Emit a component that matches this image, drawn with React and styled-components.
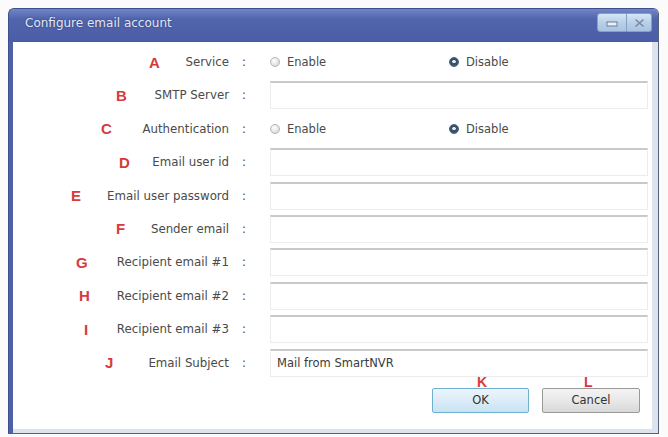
import styled, { createGlobalStyle } from "styled-components";

const Global = createGlobalStyle`
  html, body {
    margin: 0;
    padding: 0;
    background: #fbfbfb;
  }
  body {
    font-family: "DejaVu Sans", Verdana, sans-serif;
  }
`;

const Page = styled.div`
  width: 668px;
  height: 437px;
  padding: 8px 0 0 8px;
  box-sizing: border-box;
`;

const Window = styled.div`
  width: 651px;
  height: 426px;
  box-sizing: border-box;
  display: flex;
  flex-direction: column;
  border: 1px solid #55607c;
  border-top-color: #3f4f8c;
  border-left-color: #3f4f8c;
  border-radius: 6px 6px 0 0;
  background: linear-gradient(to right, #4d61a9 0, #4d61a9 4px, #dde3ec 4px);
  overflow: hidden;
`;

const TitleBar = styled.div`
  height: 33px;
  flex: none;
  display: flex;
  align-items: flex-start;
  justify-content: space-between;
  background: linear-gradient(#7185c6 0, #5165ad 30%, #4a5ca5 100%);
`;

const Title = styled.div`
  padding: 7px 0 0 16px;
  font-size: 12px;
  color: #e3e8f5;
  text-shadow: 0 0 2px rgba(20, 30, 80, 0.6);
`;

const Controls = styled.div`
  display: flex;
  margin: 4px 6px 0 0;
`;

const CtrlButton = styled.div`
  width: ${(p) => p.$w}px;
  height: 19px;
  box-sizing: border-box;
  display: flex;
  align-items: center;
  justify-content: center;
  border: 1px solid #87a0c8;
  border-radius: ${(p) => (p.$first ? "3px 0 0 3px" : "0 3px 3px 0")};
  border-left-width: ${(p) => (p.$first ? "1px" : "0")};
  background: linear-gradient(#d6e6f4, #b9d0e8 50%, #a9c3e0);
`;

const Body = styled.div`
  flex: 1;
  margin: 0 6px 4px 4px;
  background: #fff;
  display: flex;
  flex-direction: column;
`;

const Form = styled.div`
  display: grid;
  grid-template-columns: 218px 39px 378px;
  grid-auto-rows: 28px;
  row-gap: 5.4px;
  padding-top: 6px;
`;

const LabelCell = styled.div`
  display: flex;
  align-items: center;
  padding-right: 2px;
`;

const Letter = styled.span`
  margin-left: ${(p) => p.$x}px;
  font-family: "Liberation Sans", Arial, sans-serif;
  font-weight: bold;
  font-size: 15px;
  color: #d8393c;
`;

const LabelText = styled.span`
  margin-left: auto;
  font-size: 11.8px;
  color: #4a4a4a;
`;

const Colon = styled.div`
  display: flex;
  align-items: center;
  padding-left: 11px;
  font-size: 11.8px;
  color: #4a4a4a;
`;

const Input = styled.div`
  box-sizing: border-box;
  display: flex;
  align-items: center;
  padding-left: 6px;
  border: 1px solid #ececec;
  border-top: 2px solid #c9c9c9;
  background: #fff;
  font-size: 11.5px;
  color: #3a3a3a;
`;

const RadioGroup = styled.div`
  display: flex;
  align-items: center;
`;

const RadioItem = styled.label`
  width: 179px;
  display: flex;
  align-items: center;
  gap: 7px;
  font-size: 11.5px;
  color: #4a4a4a;
`;

const RadioDot = styled.span`
  width: 10px;
  height: 10px;
  box-sizing: border-box;
  border-radius: 50%;
  border: 1px solid ${(p) => (p.$on ? "#4a5a6e" : "#b4b4b4")};
  background: ${(p) =>
    p.$on
      ? "radial-gradient(circle at 50% 45%, #dfe8f2 0 1.5px, #2f4a66 2px, #526a85 100%)"
      : "radial-gradient(circle at 40% 35%, #ffffff, #d9d9d9 80%)"};
`;

const ButtonRow = styled.div`
  display: flex;
  justify-content: flex-end;
  gap: 13px;
  margin-top: 11px;
  padding-right: 12px;
`;

const BtnWrap = styled.div`
  position: relative;
`;

const Button = styled.div`
  width: ${(p) => (p.$primary ? 97 : 98)}px;
  height: 25px;
  box-sizing: border-box;
  display: flex;
  align-items: center;
  justify-content: center;
  border: 1px solid ${(p) => (p.$primary ? "#6fb0d0" : "#9a9a9a")};
  border-radius: 2px;
  background: ${(p) =>
    p.$primary
      ? "linear-gradient(#eaf5fc, #dcecf7 50%, #c8e2f2)"
      : "linear-gradient(#f4f4f4, #e8e8e8 50%, #d8d8d8)"};
  font-size: 11.5px;
  color: #333;
`;

const Tag = styled.span`
  position: absolute;
  top: -12px;
  left: ${(p) => p.$x}px;
  font-family: "Liberation Sans", Arial, sans-serif;
  font-weight: bold;
  font-size: 14px;
  line-height: 12px;
  color: #d8393c;
`;

const rows = [
  { letter: "A", x: 136, label: "Service", radio: true },
  { letter: "B", x: 103, label: "SMTP Server" },
  { letter: "C", x: 88, label: "Authentication", radio: true },
  { letter: "D", x: 106, label: "Email user id" },
  { letter: "E", x: 58, label: "Email user password" },
  { letter: "F", x: 103, label: "Sender email" },
  { letter: "G", x: 63, label: "Recipient email #1" },
  { letter: "H", x: 66, label: "Recipient email #2" },
  { letter: "I", x: 71, label: "Recipient email #3" },
  { letter: "J", x: 92, label: "Email Subject", value: "Mail from SmartNVR" },
];

export default function App() {
  return (
    <Page>
      <Global />
      <Window>
        <TitleBar>
          <Title>Configure email account</Title>
          <Controls>
            <CtrlButton $w={30} $first>
              <svg width="12" height="8" viewBox="0 0 12 8">
                <rect x="1" y="3" width="10" height="4" fill="#e8f0f8" stroke="#6a7d9e" strokeWidth="1" />
              </svg>
            </CtrlButton>
            <CtrlButton $w={25}>
              <svg width="11" height="10" viewBox="0 0 11 10">
                <path d="M1.5 1.5 L9.5 8.5 M9.5 1.5 L1.5 8.5" stroke="#7a8aa6" strokeWidth="1.6" />
              </svg>
            </CtrlButton>
          </Controls>
        </TitleBar>
        <Body>
          <Form>
            {rows.map((r) => (
              <Row key={r.letter} {...r} />
            ))}
          </Form>
          <ButtonRow>
            <BtnWrap>
              <Tag $x={45}>K</Tag>
              <Button $primary>OK</Button>
            </BtnWrap>
            <BtnWrap>
              <Tag $x={42}>L</Tag>
              <Button>Cancel</Button>
            </BtnWrap>
          </ButtonRow>
        </Body>
      </Window>
    </Page>
  );
}

function Row({ letter, x, label, radio, value }) {
  return (
    <>
      <LabelCell>
        <Letter $x={x}>{letter}</Letter>
        <LabelText>{label}</LabelText>
      </LabelCell>
      <Colon>:</Colon>
      {radio ? (
        <RadioGroup>
          <RadioItem>
            <RadioDot />
            Enable
          </RadioItem>
          <RadioItem>
            <RadioDot $on />
            Disable
          </RadioItem>
        </RadioGroup>
      ) : (
        <Input>{value}</Input>
      )}
    </>
  );
}
